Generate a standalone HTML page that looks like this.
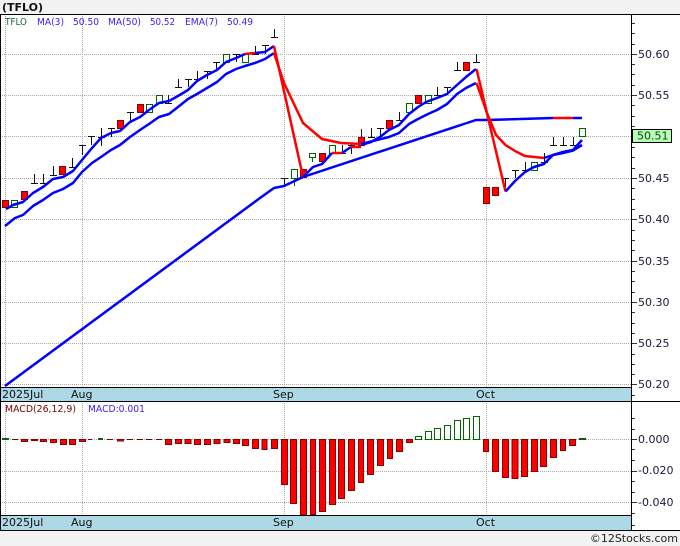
<!DOCTYPE html>
<html><head><meta charset="utf-8"><style>
html,body{margin:0;padding:0;width:680px;height:546px;overflow:hidden;background:#f2f2f2}
svg{display:block}
text{font-family:"DejaVu Sans",sans-serif;font-size:10.5px}
.l{font-size:9.6px;fill:#3a1df0}
</style></head><body>
<svg width="680" height="546" viewBox="0 0 680 546" xmlns="http://www.w3.org/2000/svg">
<rect width="680" height="546" fill="#f2f2f2"/>
<rect x="0" y="14" width="680" height="516" fill="#fff"/>
<text x="2" y="11" style="font-weight:bold;font-size:11px" fill="#111">(TFLO)</text>
<g stroke="#a8a8a8" stroke-width="1" stroke-dasharray="1 1" fill="none">
<path d="M0 54.5H631M0 95.5H631M0 136.5H631M0 178.5H631M0 219.5H631M0 261.5H631M0 302.5H631M0 343.5H631M0 384.5H631"/>
<path d="M0 439.5H631M0 471.5H631M0 502.5H631"/>
<path d="M5.5 14V387M82.5 14V387M284.5 14V387M486.5 14V387M5.5 401V515M82.5 401V515M284.5 401V515M486.5 401V515"/>
</g>
<rect x="1" y="387" width="630" height="14" fill="#add8e6"/>
<rect x="1" y="515" width="630" height="15" fill="#add8e6"/>
<!-- candles: black T -->
<path stroke="#111" stroke-width="1" fill="none" d="M34.5 174V183M31 183.5H38M43.5 174V183M40 183.5H47M53.5 166V175M50 175.5H57M72.5 158V167M69 167.5H76M82.5 145V155M79 145.5H86M91.5 136V145M88 136.5H95M101.5 128V146M98 137.5H105M111.5 128V137M108 128.5H115M130.5 112V121M127 112.5H134M168.5 95V103M165 103.5H172M178.5 79V87M175 87.5H182M188.5 79V87M185 79.5H192M197.5 71V79M194 79.5H201M207.5 71V79M204 71.5H211M216.5 62V70M213 62.5H220M236.5 54V62M233 54.5H240M255.5 46V54M252 54.5H259M265.5 45V54M262 45.5H269M274.5 29V37M271 37.5H278M284.5 178V186M281 178.5H288M342.5 145V153M339 153.5H346M351.5 144V154M348 145.5H355M371.5 128V137M368 137.5H375M380.5 128V137M377 128.5H384M399.5 112V120M396 120.5H403M437.5 87V95M434 95.5H441M447.5 87V95M444 87.5H451M457.5 62V70M454 70.5H461M476.5 54V62M473 62.5H480M505.5 178V187M502 178.5H509M515.5 170V178M512 170.5H519M525.5 162V170M522 170.5H529M544.5 153V162M541 162.5H548M553.5 137V145M550 145.5H557M563.5 137V145M560 145.5H567M573.5 137V145M570 145.5H577"/>
<path stroke="#600" stroke-width="1" fill="none" d="M361.5 129V137"/>
<path stroke="#060" stroke-width="1" fill="none" d="M294.5 178V186M312.5 158V162"/>
<!-- hollow green -->
<path stroke="#060" stroke-width="1" fill="#fff" d="M11.5 200.5h6v7h-6zM146.5 104.5h6v8h-6zM156.5 95.5h6v8h-6zM223.5 54.5h6v8h-6zM242.5 54.5h6v8h-6zM291.5 169.5h6v9h-6zM309.5 153.5h6v4h-6zM329.5 145.5h6v8h-6zM406.5 103.5h6v9h-6zM425.5 95.5h6v8h-6zM531.5 162.5h6v8h-6zM579.5 128.5h6v8h-6z"/>
<!-- red bodies -->
<path stroke="#800" stroke-width="1" fill="#f00" d="M2.5 200.5h6v7h-6zM21.5 191.5h6v8h-6zM59.5 166.5h6v8h-6zM117.5 120.5h6v8h-6zM137.5 104.5h6v8h-6zM300.5 169.5h6v8h-6zM319.5 153.5h6v8h-6zM358.5 137.5h6v8h-6zM386.5 120.5h6v8h-6zM415.5 95.5h6v8h-6zM463.5 62.5h6v8h-6zM483.5 187.5h6v16h-6zM492.5 187.5h6v8h-6z"/>
<!-- lines -->
<g fill="none" stroke-width="2.5" stroke-linejoin="round" stroke-linecap="butt">
<path stroke="#0000ff" d="M5 386L260 198L274 188L284 186L303 177L476 120L486 120L553 118M573 118L582 118"/>
<path stroke="#ff0000" d="M553 118L573 118"/>
<path stroke="#0000ff" d="M5 226L15 218L23 215L33 206L43 200L53 193L63 189L73 183L82 172L92 163L101 157L111 150L120 145L130 137L140 130L149 124L159 117L169 114L178 107L188 99L197 94L207 88L217 82L226 74L236 69L245 66L255 63L265 59L274 53"/>
<path stroke="#0000ff" d="M361 144L389 137L399 133L409 124L418 119L428 114L437 110L447 104L457 94L466 88L476 83"/>
<path stroke="#0000ff" d="M544 158L553 155L563 153L573 150.500L582 145"/>
<path stroke="#ff0000" d="M274 53L284 83L303 123L322 139L341 143L361 144"/>
<path stroke="#ff0000" d="M476.500 83L487 113L496 135L505.500 145L515 151L525 156L544 158"/>
<path stroke="#0000ff" d="M6 209L13 205L23 202L33 193L43 187L53 179L63 177L73 171L82 160L92 148L101 138L111 133L120 131L130 122L140 117L149 110L159 103L169 101L178 96L188 90L197 81L207 75L217 70L226 62L236 58L245 54M255 53L265 52L274 46"/>
<path stroke="#ff0000" d="M245 54L255 53"/>
<path stroke="#ff0000" d="M274 46L303 177"/>
<path stroke="#0000ff" d="M303 177L313 167L322 164L332 153M342 153L351 147M361 145L371 142L380 137L389 130L399 125L409 114L418 107L426 102L437 98L447 94L457 85L466 77L476 69"/>
<path stroke="#ff0000" d="M332 153L342 153M351 147L361 147"/>
<path stroke="#ff0000" d="M476.500 69L505.500 191.500"/>
<path stroke="#0000ff" d="M505.500 191.500L515 181L525 172L534 167L544 164L553 155L563 152L573 150L582 140"/>
</g>
<!-- MACD bars -->
<path stroke="#800" stroke-width="1" fill="#f00" d="M21.500 439.500h6v2h-6zM31.500 439.500h6v1h-6zM40.500 439.500h6v2h-6zM50.500 439.500h6v3h-6zM60.500 439.500h6v5h-6zM69.500 439.500h6v5h-6zM79.500 439.500h6v2h-6zM117.500 439.500h6v1.500h-6zM165.500 439.500h6v5h-6zM175.500 439.500h6v4h-6zM185 439.500h6v4h-6zM194.500 439.500h6v5h-6zM204.500 439.500h6v5h-6zM214 439.500h6v4h-6zM224 439.500h6v3h-6zM233.500 439.500h6v4h-6zM242.500 439.500h6v6h-6zM252.500 439.500h6v9h-6zM262 439.500h5v10h-5zM271.500 439.500h6v9h-6zM281.500 439.500h6v45h-6zM290.500 439.500h6v64h-6zM300.500 439.500h6v75.500h-6zM310.500 439.500h5v75h-5zM319.500 439.500h6v72h-6zM329.500 439.500h6v65h-6zM338.500 439.500h6v59h-6zM348.500 439.500h6v51h-6zM358.500 439.500h5v43h-5zM367.500 439.500h6v35h-6zM377.500 439.500h6v26h-6zM387.500 439.500h5v19h-5zM396.500 439.500h6v12h-6zM406.500 439.500h6v3h-6zM483.500 439.500h5v12h-5zM492.500 439.500h6v32h-6zM502.500 439.500h6v38h-6zM512 439.500h6v39h-6zM521.500 439.500h6v37h-6zM531.500 439.500h6v32h-6zM540.500 439.500h6v27h-6zM550.500 439.500h6v18h-6zM560.500 439.500h5v11h-5zM569.500 439.500h6v6h-6z"/>
<path stroke="#700" stroke-width="1" fill="none" d="M12 439.500h6M88 439.500h4M107 439.500h6M127 439.500h6M137 439.500h6M146 439.500h6M156 439.500h6"/>
<path stroke="#060" stroke-width="1" fill="#fff" d="M415.500 436.500h6v3h-6zM425.500 431.500h6v8h-6zM434.500 428.500h6v11h-6zM444.500 425.500h6v14h-6zM454.500 420.500h6v19h-6zM463.500 418.500h6v21h-6zM473.500 416.500h6v23h-6z"/>
<path stroke="#060" stroke-width="2" fill="none" d="M2 439h7M98 439h5M579 439h7"/>
<!-- frame -->
<path stroke="#000" stroke-width="1" fill="none" d="M0 14.500H680M0 387.500H631M0 401.500H680M0 515.500H631M0 530.500H680M631.500 14V530M0.500 14V530"/>
<!-- ticks -->
<path stroke="#333" stroke-width="1" fill="none" d="M632 23.500h3M632 33.500h3M632 44.500h3M632 54.500h5M632 64.500h3M632 74.500h3M632 85.500h3M632 95.500h5M632 105.500h3M632 116.500h3M632 126.500h3M632 147.500h3M632 157.500h3M632 168.500h3M632 178.500h5M632 188.500h3M632 199.500h3M632 209.500h3M632 219.500h5M632 230.500h3M632 240.500h3M632 250.500h3M632 261.500h5M632 271.500h3M632 281.500h3M632 292.500h3M632 302.500h5M632 312.500h3M632 323.500h3M632 333.500h3M632 343.500h5M632 354.500h3M632 364.500h3M632 374.500h3M632 384.500h5M632 395.500h3M632 418.500h3M632 429.500h3M632 439.500h5M632 449.500h3M632 460.500h3M632 471.500h5M632 481.500h3M632 492.500h3M632 502.500h5M632 513.500h3M632 525.500h3"/>
<!-- price labels -->
<g fill="#1a1a3a">
<text x="638" y="58" style="font-size:11px">50.60</text>
<text x="638" y="99" style="font-size:11px">50.55</text>
<text x="638" y="182" style="font-size:11px">50.45</text>
<text x="638" y="223" style="font-size:11px">50.40</text>
<text x="638" y="265" style="font-size:11px">50.35</text>
<text x="638" y="306" style="font-size:11px">50.30</text>
<text x="638" y="347" style="font-size:11px">50.25</text>
<text x="638" y="388" style="font-size:11px">50.20</text>
<text x="638" y="443" style="font-size:11px">0.000</text>
<text x="638" y="474" style="font-size:11px">-0.020</text>
<text x="638" y="506" style="font-size:11px">-0.040</text>
</g>
<rect x="632.500" y="129.500" width="39" height="13" fill="#b4ffb4" stroke="#000"/>
<text x="637" y="139.500" style="font-size:11px" fill="#1a3a1a">50.51</text>
<!-- legend -->
<text x="5" y="25" textLength="22" lengthAdjust="spacingAndGlyphs" style="font-size:9.600px" fill="#1a6a3a">TFLO</text>
<text x="37" y="25" textLength="27" lengthAdjust="spacingAndGlyphs" class="l">MA(3)</text>
<text x="73" y="25" textLength="26" lengthAdjust="spacingAndGlyphs" class="l">50.50</text>
<text x="108" y="25" textLength="33" lengthAdjust="spacingAndGlyphs" class="l">MA(50)</text>
<text x="150" y="25" textLength="25" lengthAdjust="spacingAndGlyphs" class="l">50.52</text>
<text x="185" y="25" textLength="33" lengthAdjust="spacingAndGlyphs" class="l">EMA(7)</text>
<text x="227" y="25" textLength="26" lengthAdjust="spacingAndGlyphs" class="l">50.49</text>
<text x="5" y="412" textLength="71" lengthAdjust="spacingAndGlyphs" style="font-size:9.600px" fill="#700">MACD(26,12,9)</text>
<text x="88" y="412" textLength="57" lengthAdjust="spacingAndGlyphs" class="l">MACD:0.001</text>
<!-- date strips -->
<g fill="#111">
<text x="2" y="398" style="font-size:11px">2025Jul</text>
<text x="71" y="398" style="font-size:11px">Aug</text>
<text x="273" y="398" style="font-size:11px">Sep</text>
<text x="476" y="398" style="font-size:11px">Oct</text>
<text x="2" y="526" style="font-size:11px">2025Jul</text>
<text x="71" y="526" style="font-size:11px">Aug</text>
<text x="273" y="526" style="font-size:11px">Sep</text>
<text x="476" y="526" style="font-size:11px">Oct</text>
</g>
<text x="678" y="542" text-anchor="end" style="font-size:11px" fill="#222">©12Stocks.com</text>
</svg>
</body></html>
